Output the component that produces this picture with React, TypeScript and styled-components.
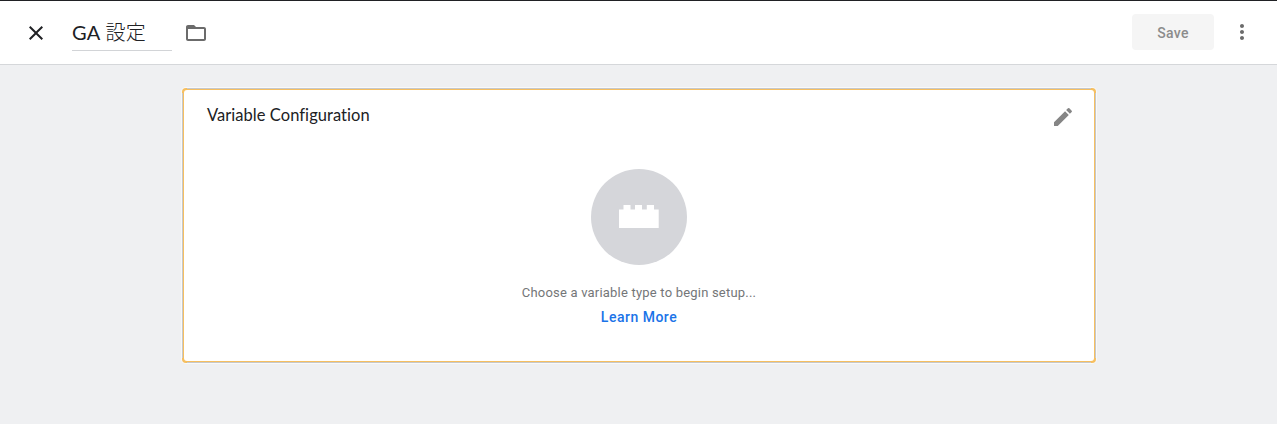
import React from 'react';
import styled, { createGlobalStyle } from 'styled-components';

const GlobalStyle = createGlobalStyle`
  * { box-sizing: border-box; }
  body { margin: 0; background: #eff0f2; font-family: Roboto, "Noto Sans CJK JP", sans-serif; }
`;

const Page = styled.div`
  min-height: 424px;
  display: flex;
  flex-direction: column;
  border-top: 1px solid #202124;
`;

const Header = styled.header`
  height: 64px;
  display: flex;
  align-items: center;
  padding: 0 23px 0 24px;
  background: #fff;
  border-bottom: 1px solid #d5d7da;
`;

const IconButton = styled.button<{ $color: string }>`
  display: flex;
  flex: none;
  padding: 0;
  border: 0;
  background: none;
  color: ${(p) => p.$color};
  svg { display: block; fill: currentColor; }
`;

const NameField = styled.div`
  width: 100px;
  height: 36px;
  margin: 0 12px 0 24px;
  border-bottom: 1px solid #d2d4d7;
  color: #202124;
  font: 400 20px/34px Lato, "Noto Sans CJK JP", sans-serif;
  letter-spacing: 0.3px;
  white-space: nowrap;
`;

const NameScript = styled.span`
  font-family: "Noto Sans CJK JP", sans-serif;
  font-weight: 300;
`;

const Actions = styled.div`
  display: flex;
  align-items: center;
  gap: 16px;
  margin: 0 0 2px auto;
`;

const SaveButton = styled.button`
  width: 82px;
  height: 36px;
  padding: 2px 0 0;
  border: 0;
  border-radius: 4px;
  background: #f5f5f5;
  color: #8c8c8c;
  font: 500 14px/20px Roboto, sans-serif;
  letter-spacing: 0.35px;
`;

const Main = styled.main`
  padding: 23px 181px 0 182px;
`;

const Card = styled.section`
  height: 275px;
  padding: 2px;
  border-radius: 4px;
  background:
    linear-gradient(#c6c8cb, #c6c8cb) center top / calc(100% - 10px) 1px no-repeat,
    linear-gradient(#c6c8cb, #c6c8cb) center bottom / calc(100% - 10px) 1px no-repeat,
    linear-gradient(#c6c8cb, #c6c8cb) left center / 1px calc(100% - 10px) no-repeat,
    linear-gradient(#c6c8cb, #c6c8cb) right center / 1px calc(100% - 10px) no-repeat,
    #f6bf60;
  box-shadow: 0 0 0 1px #f9f9f9;
`;

const CardBody = styled.div`
  height: 100%;
  border-radius: 3px;
  background: #fff;
  display: flex;
  flex-direction: column;
`;

const CardHeader = styled.div`
  display: flex;
  justify-content: space-between;
  padding: 15px 19px 0 23px;
`;

const CardTitle = styled.h2`
  margin: -2px 0 0;
  color: #202124;
  font: 400 16.5px/24px Lato, sans-serif;
  letter-spacing: 0.05px;
`;

const EmptyState = styled.div`
  display: flex;
  flex-direction: column;
  align-items: center;
  padding-top: 40px;
`;

const Badge = styled.div`
  width: 96px;
  height: 96px;
  border-radius: 50%;
  background: #d5d6da;
  svg { display: block; fill: #fff; }
`;

const Hint = styled.p`
  margin: 18px 0 0;
  color: #747678;
  font: 400 13px/20px Roboto, sans-serif;
  letter-spacing: 0.2px;
`;

const LearnMore = styled.a`
  margin-top: 4px;
  color: #1a73e8;
  font: 500 14px/20px Roboto, sans-serif;
  letter-spacing: 0.5px;
`;

export default function App() {
  return (
    <Page>
      <GlobalStyle />
      <Header>
        <IconButton $color="#202124" aria-label="Close">
          <svg width="24" height="24" viewBox="0 0 24 24">
            <path d="M19 6.41 17.59 5 12 10.59 6.41 5 5 6.41 10.59 12 5 17.59 6.41 19 12 13.41 17.59 19 19 17.59 13.41 12z" />
          </svg>
        </IconButton>
        <NameField>
          GA <NameScript>設定</NameScript>
        </NameField>
        <IconButton $color="#6b6b6b" aria-label="Folder">
          <svg width="24" height="24" viewBox="0 0 24 24">
            <path d="M20 6h-8l-2-2H4c-1.1 0-1.99.9-1.99 2L2 18c0 1.1.9 2 2 2h16c1.1 0 2-.9 2-2V8c0-1.1-.9-2-2-2zm0 12H4V8h16v10z" />
          </svg>
        </IconButton>
        <Actions>
          <SaveButton>Save</SaveButton>
          <IconButton $color="#6b6b6b" aria-label="More">
            <svg width="24" height="24" viewBox="0 0 24 24">
              <path d="M12 8c1.1 0 2-.9 2-2s-.9-2-2-2-2 .9-2 2 .9 2 2 2zm0 2c-1.1 0-2 .9-2 2s.9 2 2 2 2-.9 2-2-.9-2-2-2zm0 6c-1.1 0-2 .9-2 2s.9 2 2 2 2-.9 2-2-.9-2-2-2z" />
            </svg>
          </IconButton>
        </Actions>
      </Header>
      <Main>
        <Card>
          <CardBody>
            <CardHeader>
              <CardTitle>Variable Configuration</CardTitle>
              <IconButton $color="#858585" aria-label="Edit">
                <svg width="24" height="24" viewBox="0 0 24 24">
                  <path d="M3 17.25V21h3.75L17.81 9.94l-3.75-3.75L3 17.25zM20.71 7.04c.39-.39.39-1.02 0-1.41l-2.34-2.34a.996.996 0 0 0-1.41 0l-1.83 1.83 3.75 3.75 1.83-1.83z" />
                </svg>
              </IconButton>
            </CardHeader>
            <EmptyState>
              <Badge>
                <svg width="96" height="96" viewBox="0 0 96 96">
                  <path d="M28 40.5h4.5V36h7v4.5H44V36h7v4.5h4.8V36H63v4.5h4.7V59H28z" />
                </svg>
              </Badge>
              <Hint>Choose a variable type to begin setup...</Hint>
              <LearnMore>Learn More</LearnMore>
            </EmptyState>
          </CardBody>
        </Card>
      </Main>
    </Page>
  );
}
